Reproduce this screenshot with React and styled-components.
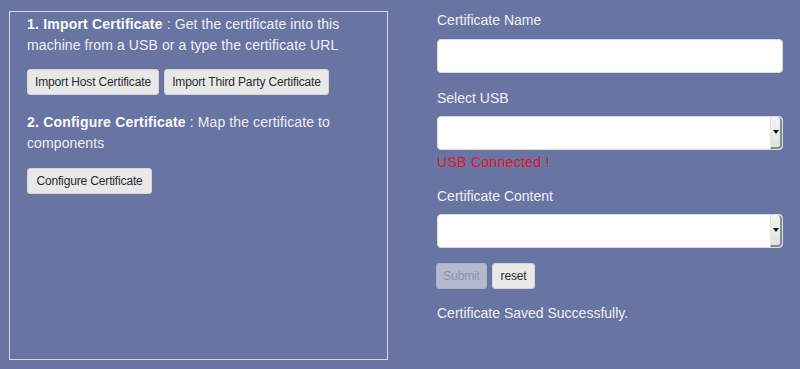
import React from "react";
import styled, { createGlobalStyle } from "styled-components";

const Global = createGlobalStyle`
  html, body { margin: 0; padding: 0; background: #6874a2; }
  body { font-family: "Liberation Sans", Arial, sans-serif; }
`;

const Page = styled.div`
  width: 800px;
  height: 369px;
  display: flex;
  background: #6874a2;
  color: #eef0f6;
  font-size: 14px;
  overflow: hidden;
`;

const LeftCol = styled.div`
  padding: 11px 0 0 9px;
  width: 379px;
  flex: none;
`;

const Panel = styled.div`
  box-sizing: border-box;
  width: 379px;
  height: 349px;
  border: 1.5px solid #d3d9e8;
  padding: 2px 16px 0 17px;
`;

const Para = styled.p`
  margin: ${(p) => p.$mt || 0}px 0 0;
  line-height: 20.5px;
  font-size: 14px;
  letter-spacing: 0.1px;
  color: #eef0f6;
  b { font-weight: bold; color: #fbfbfd; letter-spacing: 0.2px; }
`;

const ButtonRow = styled.div`
  display: flex;
  gap: 5px;
  margin-top: ${(p) => p.$mt || 0}px;
  margin-left: ${(p) => p.$ml || 0}px;
`;

const Btn = styled.button`
  height: 26px;
  box-sizing: border-box;
  padding: 0;
  white-space: nowrap;
  border: 1px solid #d5d5d8;
  border-radius: 3px;
  background: ${(p) => (p.$disabled ? "#b3b9cf" : "#e8e8e8")};
  color: ${(p) => (p.$disabled ? "#8c92aa" : "#2a2a2a")};
  border-color: ${(p) => (p.$disabled ? "#aab0c6" : "#d5d5d8")};
  font-family: "Liberation Sans", Arial, sans-serif;
  font-size: 12px;
  letter-spacing: -0.15px;
  width: ${(p) => (p.$w ? p.$w + "px" : "auto")};
  flex: none;
  cursor: pointer;
`;

const RightCol = styled.div`
  padding: 10px 0 0 49px;
  width: 346px;
  display: flex;
  flex-direction: column;
`;

const Label = styled.div`
  line-height: 20px;
  font-size: 14px;
  color: #eef0f6;
  margin-top: ${(p) => p.$mt || 0}px;
`;

const Input = styled.input`
  box-sizing: border-box;
  width: 346px;
  height: 34px;
  margin-top: ${(p) => p.$mt || 0}px;
  border: 1px solid #d8dbe4;
  border-radius: 4px;
  background: #fff;
  outline: none;
`;

const SelectBox = styled.div`
  box-sizing: border-box;
  width: 346px;
  height: 34px;
  margin-top: ${(p) => p.$mt || 0}px;
  border: 1px solid #d8dbe4;
  border-radius: 4px;
  background: #fff;
  display: flex;
  justify-content: flex-end;
  overflow: hidden;
`;

const Arrow = styled.div`
  width: 12px;
  height: 100%;
  box-sizing: border-box;
  background: linear-gradient(#f4f4f4, #e2e2e2);
  border-left: 1px solid #e4e4e4;
  border-right: 2px solid #8a8a8a;
  border-bottom: 2px solid #8a8a8a;
  border-radius: 0 4px 4px 0;
  display: flex;
  align-items: center;
  justify-content: center;
  &::after {
    content: "";
    border-left: 3px solid transparent;
    border-right: 3px solid transparent;
    border-top: 4px solid #111;
  }
`;

const ErrorText = styled.div`
  color: #e3142c;
  line-height: 20px;
  font-size: 14px;
  margin-top: 2px;
  letter-spacing: 0.3px;
`;

export default function App() {
  return (
    <Page>
      <Global />
      <LeftCol>
        <Panel>
          <Para>
            <b>1. Import Certificate</b> : Get the certificate into this machine from a USB or a type the certificate URL
          </Para>
          <ButtonRow $mt={14}>
            <Btn $w={132}>Import Host Certificate</Btn>
            <Btn $w={165}>Import Third Party Certificate</Btn>
          </ButtonRow>
          <Para $mt={17}>
            <b>2. Configure Certificate</b> : Map the certificate to components
          </Para>
          <ButtonRow $mt={15}>
            <Btn $w={125}>Configure Certificate</Btn>
          </ButtonRow>
        </Panel>
      </LeftCol>
      <RightCol>
        <Label>Certificate Name</Label>
        <Input $mt={9} />
        <Label $mt={15}>Select USB</Label>
        <SelectBox $mt={8}>
          <Arrow />
        </SelectBox>
        <ErrorText>USB Connected !</ErrorText>
        <Label $mt={14}>Certificate Content</Label>
        <SelectBox $mt={8}>
          <Arrow />
        </SelectBox>
        <ButtonRow $mt={15} $ml={-1}>
          <Btn $disabled $w={51}>Submit</Btn>
          <Btn $w={43}>reset</Btn>
        </ButtonRow>
        <Label $mt={14}>Certificate Saved Successfully.</Label>
      </RightCol>
    </Page>
  );
}
